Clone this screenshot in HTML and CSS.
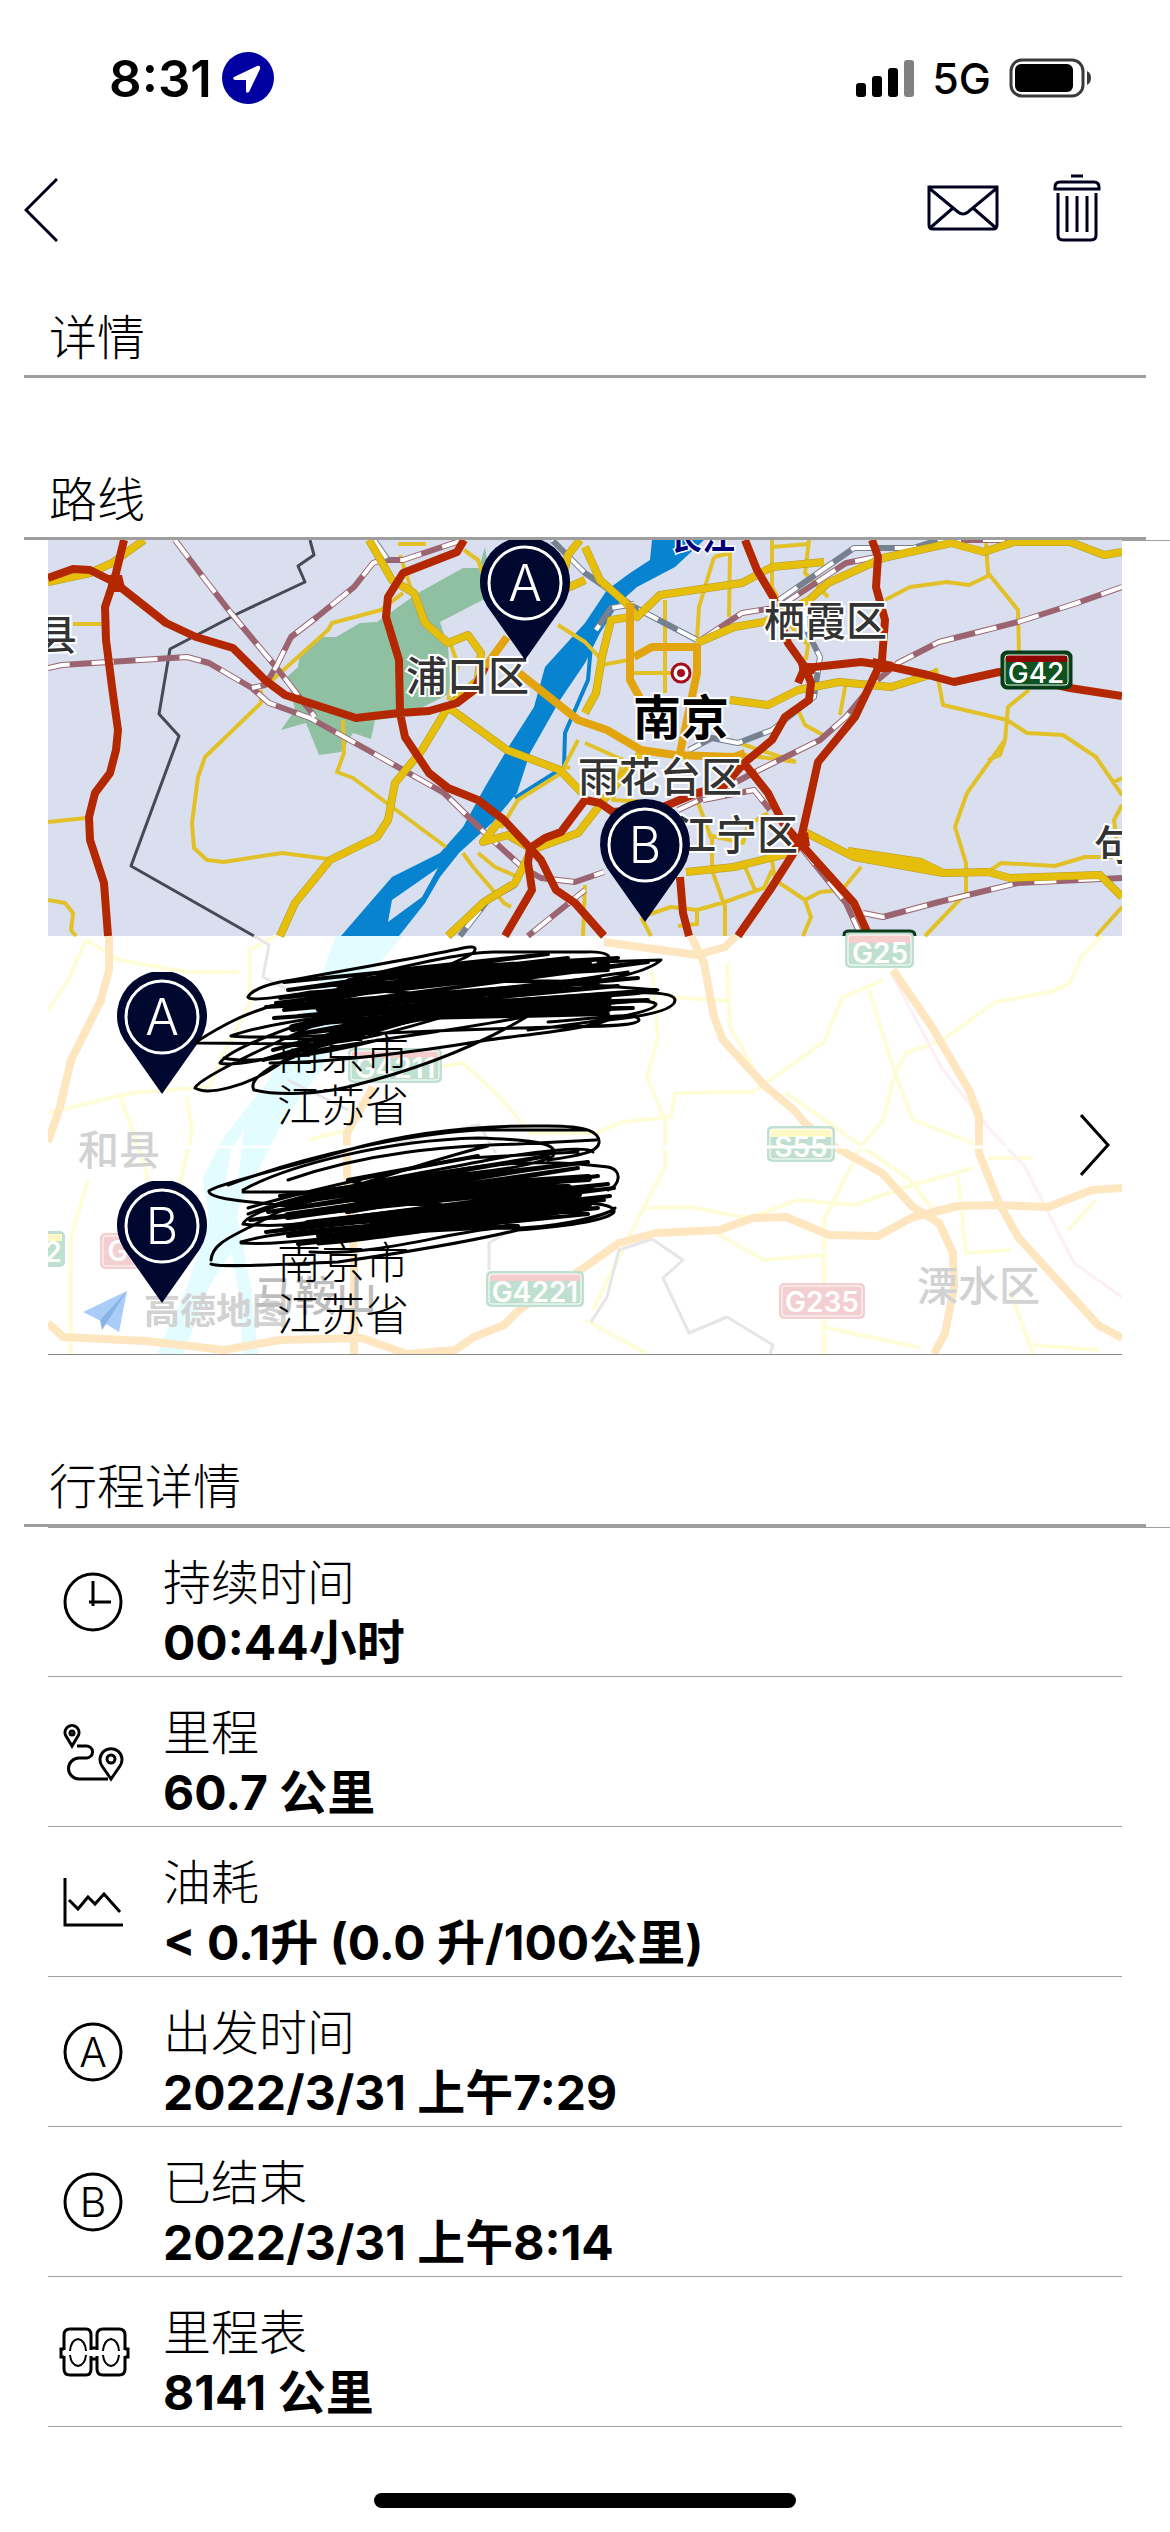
FILE: index.html
```html
<!DOCTYPE html>
<html lang="zh-CN">
<head>
  <meta charset="UTF-8">
  <title>行程详情</title>
  <meta name="viewport" content="width=device-width, initial-scale=1.0">
  <link rel="stylesheet" href="styles.css">
</head>
<body>
  <div class="status-bar">
    <div class="status-left">
      <span class="clock">8:31</span>
      <svg width="52" height="52" viewBox="0 0 52 52">
        <circle cx="26" cy="26" r="26" fill="#0000a0"/>
        <path d="M12 25 L35 14 Q39 13 38 17 L27 40 Q24 42 24 39 L24 28 L13 28 Q10 27 12 25 Z" fill="#fff"/>
      </svg>
    </div>
    <div class="status-right">
      <svg width="58" height="38" viewBox="0 0 58 38">
        <rect x="0" y="24" width="10" height="14" rx="3"/>
        <rect x="16" y="17" width="10" height="21" rx="3"/>
        <rect x="32" y="9" width="10" height="29" rx="3"/>
        <rect x="48" y="1" width="10" height="37" rx="3" fill="#808080"/>
      </svg>
      <span class="network">5G</span>
      <svg width="82" height="40" viewBox="0 0 82 40">
        <rect x="2" y="2" width="72" height="36" rx="11" fill="none" stroke="#3a3a3a" stroke-width="3"/>
        <rect x="6" y="6" width="58" height="28" rx="6"/>
        <path d="M78 13 Q82 15 82 20 Q82 25 78 27 Z" fill="#3a3a3a"/>
      </svg>
    </div>
  </div>

  <nav class="nav-bar">
    <button class="icon-btn" aria-label="返回">
      <svg width="34" height="64" viewBox="0 0 34 64"><path class="nav-line" d="M33 1 L2 32 L33 63"/></svg>
    </button>
    <div class="nav-actions">
      <button class="icon-btn" aria-label="邮件">
        <svg width="72" height="46" viewBox="0 0 72 46">
          <path class="nav-line" d="M2 2 H70 V40 Q70 44 66 44 H6 Q2 44 2 40 Z M2 3 L31 27 Q36 31 41 27 L70 3 M3 43 L26 23 M69 43 L46 23"/>
        </svg>
      </button>
      <button class="icon-btn" aria-label="删除">
        <svg width="48" height="68" viewBox="0 0 48 68">
          <path class="nav-line" d="M18 2 H30 M2 15 V13 Q2 8 7 8 H41 Q46 8 46 13 V15 Z M5 19 V61 Q5 66 10 66 H38 Q43 66 43 61 V19 M14 22 V58 M24 22 V58 M34 22 V58"/>
        </svg>
      </button>
    </div>
  </nav>

  <h1 class="heading">详情</h1>

  <h2 class="heading">路线</h2>
  <div class="thin-line"></div>
  <section class="route">
    <svg class="map" viewBox="0 0 1074 814">
      <defs>
        <path id="rails" d="M0 128 L14 125 L139 117 L161 123 L204 148 L221 163 L262 178 L325 213 L396 253 L437 293 L474 327 L493 338 L527 342 L556 332
          M127 0 L155 37 L183 73 L228 127 L267 177
          M415 0 L355 20 L334 20 L325 23 L306 47 L269 77 L243 97 L228 127 L217 145 L204 148
          M1074 47 L1029 63 L970 82 L891 102 L850 123 L826 143 L798 177 L772 200 L705 233 L679 247 L630 270
          M753 307 L798 363 L813 396 M815 373 L835 377 L891 362 L970 343 L1074 338
          M653 100 L694 73 L731 67 L798 23 L828 17 M655 260 L706 250 L722 270 M537 350 L480 396 M891 0 L960 0"/>
        <path id="metro" d="M731 60 L806 8 L865 8 L891 0 M757 70 L757 87 L772 117 L766 157 L724 190 L690 203 L664 198 L641 210
          M649 100 L586 67 L537 33 L504 0 M586 64 L563 68 L548 90 M326 0 L340 20 M467 345 L440 360 L412 396"/>
        <path id="main" d="M321 0 L344 40 L366 53 L377 83 L400 103 L420 95 L433 113 L430 140 L400 167
          M400 167 L374 210 L347 243 L340 280 L329 297 L282 320 L247 363 L232 396
          M400 167 L459 210 L512 230 L534 253 M0 42 L42 33 L64 23 L96 0
          M537 7 L552 40 L578 63 L589 77 L612 55 L694 43 L724 27 L776 22
          M649 103 L686 87 L716 82 L761 60 L780 43 L835 18 L903 3 L936 12 L966 2 L1022 2 L1056 15 L1074 12
          M582 77 L563 80 L554 117 L548 153 L537 173 M682 160 L720 165 L750 150 L791 142 L843 147 L888 133
          M753 290 L806 317 L895 333 L940 332 L962 338 L1052 335 L1074 357 M800 311 L873 322 L895 333
          M638 332 L686 327 L742 313 L752 302 M482 313 L467 343 L436 362 L400 396 M489 308 L530 293 L552 265 L593 213
          M482 308 L460 295 L435 302 L456 275 M512 53 L520 15 L532 0 M506 54 L537 40"/>
        <path id="ring" d="M471 133 L530 180 L559 190 L593 210 L627 215 L686 217 L697 213 M582 63 L582 140 L592 158
          M586 117 L604 107 L649 107 L649 133 L632 213 M437 127 L459 97"/>
      </defs>

      <rect width="1074" height="396" fill="#d9dfef"/>
      <path class="park" d="M437 7 L441 33 L448 53 L392 82 L400 107 L403 153 L355 177 L327 180 L323 199 L305 193 L293 212 L271 215 L258 183 L233 190 L247 170 L239 137 L250 127 L252 113 L273 97 L288 97 L312 83 L329 82 L370 53 L415 28 L431 28 Z"/>
      <path class="river" d="M293 396 L344 337 L392 313 L415 287 L437 247 L463 203 L486 167 L497 127 L537 83 L559 50 L582 33 L602 20 L604 0 L656 0 L627 27 L589 47 L571 63 L552 93 L537 123 L512 160 L482 213 L469 253 L444 283 L411 313 L392 337 L377 363 L351 396 Z M390 328 L344 360 L340 382 L374 357 Z"/>
      <path class="stream" d="M544 93 L540 140 L517 193 L516 227 L467 258"/>
      <path class="border" d="M262 0 L266 15 L250 26 L257 42 L191 73 L122 109 L111 174 L131 196 L83 326 L206 396"/>

      <path class="lane" d="M213 150 L213 163 L157 217 L150 237 L144 283 L146 308 L159 320 L176 322 L234 313 L280 319
        M355 53 L333 70 L284 83 L280 90 L221 143 M295 180 L296 213 L289 232 L305 238 L398 307
        M25 84 L55 84 M0 282 L38 278 M0 360 L17 363 L25 373 L23 390 L28 396
        M938 3 L940 33 L970 70 L971 113 M837 60 L862 47 L899 42 L921 45 L942 35
        M981 150 L960 167 L957 200 L919 253 L907 287 L918 323 L918 353 L877 396 M957 200 L952 215 L940 220
        M888 128 L895 165 L959 180 L979 193 L1015 195 L1048 217 L1074 255 M1074 238 L1064 243
        M940 332 L953 323 L1007 326 L1037 317 L1074 317 M1074 367 L1048 396 M1074 265 L1066 280 L1070 310
        M724 320 L727 340 L757 360 L763 377 L755 396 M757 360 L772 352 L794 350 L813 327
        M664 330 L677 367 L677 396 M593 377 L623 367 L649 370 L677 362 L716 348 L724 330 M697 327 L707 350 M649 370 L649 384 L630 386
        M617 60 L617 153 M586 133 L623 133 M666 17 L651 67 L649 100 M666 17 L682 13 L681 77 M724 0 L724 47 L731 60
        M761 0 L757 33 L780 57 M724 7 L761 4 M798 142 L792 175 M750 170 L757 185 L775 195 M742 85 L760 105 L758 120
        M537 203 L575 220 M649 260 L664 300 L664 330 M575 220 L565 260 L600 262 M697 215 L748 222 M682 200 L748 222
        M720 273 L700 285 L695 303 L660 295 M530 200 L516 227 L522 228 M515 232 L470 260 L453 288
        M415 313 L425 327 L456 363 L463 367 M430 313 L447 327 L470 337 M510 85 L537 102 L552 118 M554 125 L580 120
        M350 4 L378 4 M416 10 L430 20 L437 40 M365 55 L352 15 M403 105 L410 125 L400 160 M593 377 L603 396 M537 345 L535 396"/>
      <use href="#rails" class="rail"/>
      <use href="#rails" class="rail-dash"/>
      <use href="#metro" class="metro"/>
      <use href="#metro" class="rail-dash"/>
      <use href="#main" class="main-case"/>
      <use href="#main" class="main"/>
      <use href="#ring" class="ring"/>
      <path class="highway" d="M76 0 L68 33 L65 43 L57 67 L58 100 L64 147 L70 190 L68 210 L62 233 L47 253 L41 277 L42 300 L56 343 L60 396
        M0 38 L25 29 L42 30 L66 42 L118 83 L148 97 L185 108 L217 140 L237 155 L308 178 L351 173 L381 171 L409 163 L426 150 L437 127
        M416 0 L409 12 L355 33 L340 57 L338 77 L351 120 L352 173 L357 197 L381 233 L400 248 L430 260 L456 280 L482 308 L480 323 L484 350 L457 396
        M482 308 L493 320 L508 350 L527 363 L556 396 M482 308 L497 298 L513 292 L537 260 L552 263 L565 272 L615 267 L649 253 L675 247 L696 223
        M632 337 L635 373 L641 396 M697 0 L709 30 L725 57 L740 103 L757 127 L763 143 L761 160 L737 177 L724 200 L696 223 L720 253 L735 283 L752 303 L806 363 L821 396
        M757 127 L750 143 M752 303 L722 350 L690 396 M824 0 L830 17 L828 47 L837 80 L834 120 L807 177 L770 222 L761 263 L752 303
        M757 128 L813 122 L835 125 L880 135 L906 142 L951 132 L1022 148 L1074 156"/>
      <path class="junction" d="M60 35 L74 35 L78 52 L60 52 Z M825 118 L845 122 L842 132 L826 132 Z M742 293 L752 296 L760 292 L762 306 L750 310 L740 305 Z M750 122 L770 124 L766 134 L752 134 Z"/>

      <!-- faded half, behind the stops -->
      <path class="river-soft" d="M288 396 L269 447 L221 540 L176 597 L155 637 L161 680 L139 747 L109 814 L135 814 L161 747 L183 713 L191 667 L236 580 L273 530 L310 447 L355 396 Z M178 680 L190 747 L195 814 L210 814 L203 747 L190 680 Z M176 650 L183 610 L196 590 L190 640 Z"/>
      <path class="lane-soft" d="M0 573 L83 553 L161 547 M38 400 L71 420 L139 432 L191 432 M228 396 L202 410 L202 463 L176 513 L161 547
        M139 557 L144 593 L131 647 M392 527 L415 523 L450 555 L482 593 L548 593 L574 582 L623 577 L627 553 L705 552 L776 502 L794 458 L835 440
        M23 814 L23 697 L40 640 M38 400 L20 440 L0 470 M1054 396 L1033 417 L1022 443 L1003 452 L947 462 L895 500 L858 513 L847 533 L835 580 L813 607 L776 680 L776 814
        M821 450 L847 533 L865 580 L925 603 M593 668 L641 667 L701 678 L750 660 L806 665 L858 647 L925 628
        M604 430 L610 497 L599 537 L617 580 L617 627 L593 673 L545 770 M668 693 L716 720 L776 715
        M679 423 L682 487 L705 527 M738 553 L862 640 L885 670 M910 637 L918 713 L962 710 M776 787 L873 808 M537 780 L600 814
        M962 750 L985 814 M985 805 L1050 810 M1020 690 L1048 660 M940 618 L985 618 M71 553 L95 620 L110 680 M622 457 L679 461 M260 600 L299 590"/>
      <path class="pink-soft" d="M843 433 L895 530 L940 587 L977 627 L1026 723 L1074 757"/>
      <path class="border-soft" d="M206 396 L221 405 L215 437 L250 455 M240 540 L300 570 M347 603 L431 585 L448 613 M543 782 L559 757 L571 710 L604 699 L635 720 L615 738 L641 793 L679 777 L725 805 L722 814 M441 730 L441 703 L455 695 L490 650 L450 640"/>
      <path class="highway-soft" d="M61 396 L61 430 L53 460 L23 520 L12 567 L0 602
        M0 783 L15 797 L98 801 L176 810 L232 800 L314 798 L359 814 L407 810 L426 797 L456 785 L471 770 L537 727 L571 703 L608 693 L671 690 L705 678 L738 677 L781 695 L830 696 L865 677 L910 666 L951 665 L1000 667 L1044 650 L1074 648
        M845 430 L884 487 L921 550 L931 577 L931 613 L951 663 L970 697 L1050 785 L1074 798
        M556 402 L649 415 L677 407 L688 396 M643 396 L656 423 L666 477 L675 500 L716 545 L746 570 L757 583 L787 607 L834 633 L865 667 L891 683 L905 713 L906 747 L897 793 L886 814
        M325 547 L299 593 L299 633 L306 713 L306 814"/>
      <path d="M0 607 H1074" stroke="#fff" stroke-width="3"/>

      <g class="area">
        <text x="-12" y="110">县</text>
        <text x="358" y="151">浦口区</text>
        <text x="716" y="96">栖霞区</text>
        <text x="530" y="252">雨花台区</text>
        <text x="627" y="310">江宁区</text>
        <text x="1046" y="320">句</text>
      </g>
      <text class="city" x="585" y="195">南京</text>
      <text class="river-name" x="621" y="10">长江</text>
      <circle cx="633" cy="133" r="9" fill="#fff" stroke="#a50d1c" stroke-width="3"/>
      <circle cx="633" cy="133" r="4" fill="#a50d1c"/>
      <g>
        <rect x="954" y="112" width="69" height="36" rx="5" fill="#0d5220" stroke="#093a17" stroke-width="3"/>
        <path d="M958 115 H1019 V122 H958 Z" fill="#8d0606"/>
        <rect x="957" y="115" width="63" height="30" rx="3" fill="none" stroke="#e8efe8"/>
        <text class="shield-text" x="988" y="143">G42</text>
      </g>
      <g class="area-soft">
        <text x="30" y="625">和县</text>
        <text x="869" y="761">溧水区</text>
        <text class="amap" x="96" y="784">高德地图</text>
        <text class="maanshan" x="206" y="771">马鞍山</text>
      </g>
      <path d="M35 772 L79 751 L55 782 Z M79 751 L71 792 L55 782 Z" fill="#a9cdf6"/>
      <path d="M79 751 L52 780 L54 790 Z" fill="#8ab4e6"/>
      <g class="shield-soft">
        <rect x="797" y="392" width="69" height="36" rx="5"/>
        <path d="M800 395 H863 V403 H800 Z" fill="#f6cdcd"/>
        <rect class="inner" x="800" y="395" width="63" height="30" rx="3"/>
        <text x="832" y="423">G25</text>
        <rect x="719" y="586" width="68" height="36" rx="5"/>
        <path d="M722 589 H784 V597 H722 Z" fill="#fdf8c4"/>
        <rect class="inner" x="722" y="589" width="62" height="30" rx="3"/>
        <text x="753" y="617">S55</text>
        <path d="M719 607 H787" stroke="#fff" stroke-width="3"/>
        <rect x="438" y="731" width="98" height="36" rx="5"/>
        <path d="M441 734 H533 V741 H441 Z" fill="#f6cdcd"/>
        <rect class="inner" x="441" y="734" width="92" height="30" rx="3"/>
        <text x="487" y="762">G4221</text>
        <rect x="300" y="508" width="94" height="35" rx="5"/>
        <path d="M303 511 H391 V518 H303 Z" fill="#f6cdcd"/>
        <rect class="inner" x="303" y="511" width="88" height="29" rx="3"/>
        <text x="347" y="538">G4211</text>
        <rect x="-40" y="691" width="57" height="36" rx="5"/>
        <path d="M0 694 H14 V701 H0 Z" fill="#fdf8c4"/>
        <text x="5" y="722">2</text>
        <rect x="731" y="743" width="86" height="36" rx="5" fill="#f3cfd1"/>
        <rect class="inner" x="734" y="746" width="80" height="30" rx="3"/>
        <text x="774" y="772">G235</text>
        <rect x="52" y="693" width="72" height="36" rx="5" fill="#f3cfd1"/>
        <rect class="inner" x="55" y="696" width="66" height="30" rx="3"/>
        <text x="70" y="721">G</text>
      </g>
      <path d="M796 396 V395 Q796 391 801 391 H862 Q867 391 867 396" fill="none" stroke="#0b3a1c" stroke-width="3"/>

      <g transform="translate(432 -2)">
        <path class="pin-shape" d="M45 122 L7 68 A45 45 0 1 1 83 68 Z"/>
        <circle class="pin-ring" cx="45" cy="45" r="36"/>
        <text class="pin-letter" x="45" y="63">A</text>
      </g>
      <g transform="translate(552 260)">
        <path class="pin-shape" d="M45 122 L7 68 A45 45 0 1 1 83 68 Z"/>
        <circle class="pin-ring" cx="45" cy="45" r="36"/>
        <text class="pin-letter" x="45" y="63">B</text>
      </g>
    </svg>

    <div class="stops-panel">
      <ul class="stops">
        <li class="stop">
          <svg width="90" height="122" viewBox="0 0 90 122">
            <path class="pin-shape" d="M45 122 L7 68 A45 45 0 1 1 83 68 Z"/>
            <circle class="pin-ring" cx="45" cy="45" r="36"/>
            <text class="pin-letter" x="45" y="63">A</text>
          </svg>
          <p class="address"><br>南京市<br>江苏省</p>
        </li>
        <li class="stop">
          <svg width="90" height="122" viewBox="0 0 90 122">
            <path class="pin-shape" d="M45 122 L7 68 A45 45 0 1 1 83 68 Z"/>
            <circle class="pin-ring" cx="45" cy="45" r="36"/>
            <text class="pin-letter" x="45" y="63">B</text>
          </svg>
          <p class="address"><br>南京市<br>江苏省</p>
        </li>
      </ul>
      <button class="icon-btn" aria-label="查看路线">
        <svg width="30" height="62" viewBox="0 0 30 62"><path d="M1 1 L28 31 L1 61" fill="none" stroke="#000" stroke-width="3"/></svg>
      </button>
    </div>

    <!-- street lines crossed out by hand -->
    <svg class="scribble" viewBox="0 0 1074 814">
      <path d="M200 457 Q205 448 232 442 C300 430 370 418 415 408 C432 404 430 412 416 418 C380 436 330 450 262 452 C240 456 200 462 200 457
        M300 440 C360 425 420 412 445 412 L537 412 C560 411 570 418 550 422 L613 420 C600 432 560 440 530 444 L610 450 C590 456 540 456 520 458
        M148 502 C170 488 200 470 240 462 C300 452 420 430 500 420 M148 503 L269 504 C330 500 380 480 420 470
        M183 496 C210 486 260 478 330 470 C420 460 520 440 580 432 M183 496 C230 500 330 492 470 488 C520 486 590 488 591 480 C590 470 540 480 500 482
        M172 523 C180 510 240 486 300 470 M172 523 C190 530 300 500 380 476 M176 518 C200 524 270 516 330 500
        M147 548 C150 540 200 515 260 488 C300 470 330 460 350 455 M147 548 C160 556 200 546 230 525 C260 505 300 485 340 470
        M206 550 C200 540 220 525 260 512 C320 500 400 492 470 478 C500 468 530 465 560 455 M206 550 C230 556 270 554 300 547 C380 527 440 500 480 476
        M222 523 C300 522 380 510 440 500 C500 492 540 488 560 480 C600 476 627 470 627 460 C626 450 580 452 540 456 M480 490 C530 484 607 474 608 464 C600 458 560 462 520 470"/>
      <path class="dense" d="M236 442 L420 424 L240 450 L520 418 L232 458 L560 424 L228 463 L600 422 L236 470 L590 438 L218 467 L570 446 L250 476 L608 450 L226 478 L560 456 L260 484 L600 460 L270 470 L585 468 L280 480 L560 474 L290 446 L540 430 L330 436 L570 418 L350 430 L500 414 L420 424 L560 430 L380 440 L540 442 L300 460 L520 462 L250 494 L350 476 L225 510 L380 470 L215 520 L340 485 L240 505 L420 470"/>
      <path class="solid" d="M262 462 L340 446 L500 432 M280 468 L420 454 L550 440 M300 474 L440 464 L560 456 M330 448 L470 430 L540 424 M400 474 L560 468 M245 488 L300 476"/>
      <path d="M161 651 C170 644 230 630 300 610 C370 590 440 585 500 586 C540 586 552 592 551 603 C550 612 530 616 500 620
        M161 651 C160 660 210 662 240 666 C300 650 380 620 440 606 M195 650 C240 625 340 600 430 598 C500 600 510 606 505 616 C480 630 400 635 360 640
        M195 652 L290 652 M200 674 C260 650 340 640 440 620 C480 612 540 605 545 612 M195 684 C200 670 280 650 330 644 C400 630 470 615 560 627 C575 630 572 645 560 650
        M195 684 C240 690 320 676 400 670 M163 720 C165 700 190 695 230 672 C280 655 300 650 350 640 M163 724 C170 728 240 724 290 722 C360 712 420 702 470 690 C520 686 560 680 566 672 C568 664 540 662 520 664
        M193 702 C230 690 330 685 400 680 M193 703 C240 706 310 694 360 686 M262 712 C330 716 400 692 450 688 C500 690 560 676 567 668 M270 704 C330 700 420 684 480 676 M200 668 C260 650 360 628 420 618 L530 612
        M180 645 C260 615 360 594 430 590 L540 590 M240 640 C320 612 400 606 470 604 L548 600"/>
      <path class="dense" d="M232 656 L420 632 L236 664 L480 630 L220 672 L530 628 L226 678 L550 636 L202 680 L560 644 L236 686 L566 648 L218 692 L562 656 L240 696 L556 660 L250 686 L550 668 L280 700 L540 674 L300 660 L520 640 L330 650 L540 622 L300 650 L500 616 L350 640 L545 650 L310 680 L530 666 L250 704 L420 686 L270 696 L470 686 L300 640 L430 616"/>
      <path class="solid" d="M240 676 L340 662 L480 648 M260 684 L400 668 L530 654 M300 670 L450 644 L540 638 M290 692 L420 680 L540 664 M360 650 L520 648"/>
    </svg>
  </section>

  <h2 class="heading">行程详情</h2>
  <div class="thin-line"></div>
  <ul class="details">
    <li class="detail">
      <svg class="detail-icon" viewBox="0 0 60 60"><circle cx="30" cy="30" r="28"/><path d="M30 9 V34 M26 30 H48"/></svg>
      <div><p class="label">持续时间</p><p class="value">00:44小时</p></div>
    </li>
    <li class="detail">
      <svg class="detail-icon" viewBox="0 0 60 60">
        <path d="M9 24 L3 14 A7 7 0 1 1 15 14 Z M48 57 L39 44 A11 11 0 1 1 57 44 Z M14 24 H23 A6 6 0 0 1 24 36 H16 A10 10 0 0 0 16 57 H45"/>
        <circle cx="9" cy="11" r="2"/><circle cx="48" cy="37" r="4"/>
      </svg>
      <div><p class="label">里程</p><p class="value">60.7 公里</p></div>
    </li>
    <li class="detail">
      <svg class="detail-icon" viewBox="0 0 60 60"><path d="M2 6 V53 H60 M6 28 L15 37 L25 25 L32 32 L41 22 L57 40"/></svg>
      <div><p class="label">油耗</p><p class="value">&lt; 0.1升 (0.0 升/100公里)</p></div>
    </li>
    <li class="detail">
      <svg class="detail-icon" viewBox="0 0 60 60"><circle cx="30" cy="30" r="28"/><text x="30" y="45">A</text></svg>
      <div><p class="label">出发时间</p><p class="value">2022/3/31 上午7:29</p></div>
    </li>
    <li class="detail">
      <svg class="detail-icon" viewBox="0 0 60 60"><circle cx="30" cy="30" r="28"/><text x="30" y="45">B</text></svg>
      <div><p class="label">已结束</p><p class="value">2022/3/31 上午8:14</p></div>
    </li>
    <li class="detail">
      <svg class="detail-icon" viewBox="0 0 60 60">
        <path d="M1 28 V13 Q1 7 7 7 H23 Q28 7 28 13 V28 M1 34 V47 Q1 53 7 53 H23 Q28 53 28 47 V34 M34 28 V13 Q34 7 40 7 H56 Q62 7 62 13 V28 M34 34 V47 Q34 53 40 53 H56 Q62 53 62 47 V34 M1 27 H-2 V35 H1 M62 27 H65 V35 H62 M28 26 H34 M28 37 H34"/>
        <path class="hair" d="M7 29 Q8 18 15 17 Q22 18 23 29 M7 33 Q8 43 15 44 Q22 43 23 33 M40 29 Q41 18 48 17 Q55 18 56 29 M40 33 Q41 43 48 44 Q55 43 56 33"/>
      </svg>
      <div><p class="label">里程表</p><p class="value">8141 公里</p></div>
    </li>
  </ul>

  <div class="home-indicator"></div>
</body>
</html>
```

FILE: styles.css
```css
* { box-sizing: border-box; }
body {
  margin: 0;
  min-height: 100vh;
  display: flex;
  flex-direction: column;
  background-color: #fff;
  color: #000;
  font-family: Inter, "Noto Sans CJK SC", sans-serif;
}
svg { display: block; flex-shrink: 0; }
h1, h2, p, ul { margin: 0; padding: 0; }
ul { list-style: none; }

.status-bar {
  display: flex;
  justify-content: space-between;
  align-items: center;
  height: 156px;
  padding: 0 79px 0 109px;
}
.status-left { display: flex; align-items: center; gap: 10px; }
.status-right { display: flex; align-items: center; gap: 18px; }
.clock { font-size: 51px; font-weight: 600; }
.network { font-size: 43px; font-weight: 500; }

.nav-bar {
  display: flex;
  justify-content: space-between;
  align-items: flex-end;
  height: 102px;
  padding: 0 69px 16px 24px;
}
.nav-actions { display: flex; align-items: center; gap: 54px; }
.icon-btn { background: none; border: 0; padding: 0; cursor: pointer; }
.nav-line { fill: none; stroke: #00001e; stroke-width: 3; }

.heading {
  margin: 0 24px;
  padding: 0 26px 0 25px;
  height: 120px;
  line-height: 160px;
  border-bottom: 3px solid #9e9e9e;
  font-size: 48px;
  font-weight: 300;
}
.heading + .heading { margin-top: 42px; }
.route + .heading { margin-top: 52px; }
.thin-line { height: 1px; margin: 0 0 -1px 48px; background-color: #9e9e9e; }

.route {
  display: grid;
  margin: 0 48px;
  border-bottom: 1px solid #888;
}
.map, .scribble, .stops-panel { grid-area: 1 / 1; }
.map, .scribble { width: 100%; height: auto; }
.scribble {
  pointer-events: none;
  fill: none;
  stroke: #000;
  stroke-width: 3;
  stroke-linejoin: round;
  stroke-linecap: round;
}
.scribble .dense { stroke-width: 4; }
.scribble .solid { stroke-width: 8; }

.stops-panel {
  align-self: end;
  display: flex;
  align-items: center;
  padding: 0 12px 0 69px;
}
.stops { flex: 1; }
.stop { display: flex; gap: 70px; height: 209px; padding-top: 36px; }
.address { padding-top: 4px; font-size: 44px; line-height: 52px; font-weight: 300; }

.pin-shape { fill: #00082f; }
.pin-ring { fill: none; stroke: #fff; stroke-width: 3; }
.pin-letter { fill: #fff; font-size: 50px; font-weight: 300; text-anchor: middle; }

/* map */
.map path, .map use { stroke-linejoin: round; }
.park { fill: #90c0a2; }
.river { fill: #0783d0; fill-rule: evenodd; }
.stream { fill: none; stroke: #0783d0; stroke-width: 4; }
.border { fill: none; stroke: #454a55; stroke-width: 3; }
.lane { fill: none; stroke: #e2c128; stroke-width: 4; }
.main-case { fill: none; stroke: #b39a26; stroke-width: 8; }
.main { fill: none; stroke: #e6bf0c; stroke-width: 7; }
.ring { fill: none; stroke: #e3a50f; stroke-width: 8; }
.highway { fill: none; stroke: #b32800; stroke-width: 8; }
.junction { fill: #b32800; }
.rail { fill: none; stroke: #9b6470; stroke-width: 6; }
.metro { fill: none; stroke: #76818f; stroke-width: 6; }
.rail-dash { fill: none; stroke: #fff; stroke-width: 4; stroke-dasharray: 22 22; }
.river-soft { fill: #e3fcff; }
.lane-soft { fill: none; stroke: #fffcd8; stroke-width: 4; }
.pink-soft { fill: none; stroke: #fdeff3; stroke-width: 3; }
.border-soft { fill: none; stroke: #e6e6ea; stroke-width: 3; }
.highway-soft { fill: none; stroke: #fde6c0; stroke-width: 8; }
.area, .area-soft { font-size: 41px; font-weight: 500; }
.area { fill: #333; stroke: #fff; stroke-width: 4; paint-order: stroke; }
.city { font-size: 48px; font-weight: 700; stroke: #fff; stroke-width: 4; paint-order: stroke; }
.river-name { font-size: 33px; font-weight: 700; fill: #00007a; stroke: #fff; stroke-width: 3; paint-order: stroke; }
.area-soft { fill: #d2d2d2; }
.amap { font-size: 36px; font-weight: 700; }
.maanshan { fill: #bdbdbd; }
.shield-text { fill: #fff; font-size: 28px; font-weight: 500; text-anchor: middle; }
.shield-soft { fill: #bfe0d1; font-size: 28px; font-weight: 600; text-anchor: middle; }
.shield-soft .inner { fill: none; stroke: #fff; }
.shield-soft text { fill: #fff; }

.details { margin: 0 48px; }
.detail {
  display: flex;
  gap: 40px;
  padding: 26px 0 3px 15px;
  border-bottom: 1px solid #9e9e9e;
  line-height: 60px;
  font-size: 48px;
}
.detail-icon {
  width: 60px;
  height: 60px;
  margin-top: 19px;
  overflow: visible;
  fill: none;
  stroke: #000;
  stroke-width: 3;
}
.detail-icon text { fill: #000; stroke: none; font-size: 41px; font-weight: 300; text-anchor: middle; }
.detail-icon .hair { stroke-width: 2; }
.label { font-weight: 300; }
.value { font-weight: 700; }

.home-indicator {
  width: 36%;
  height: 15px;
  margin: auto auto 24px;
  border-radius: 8px;
  background-color: #000;
}
```
